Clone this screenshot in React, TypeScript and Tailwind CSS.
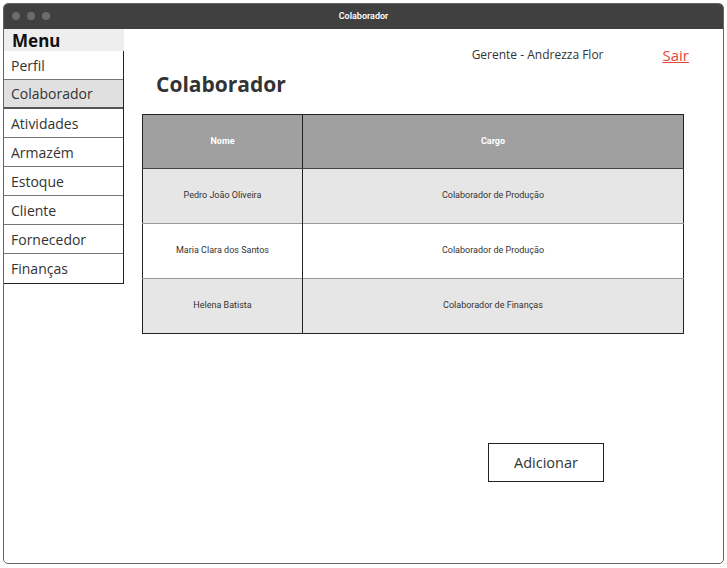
const menu = ['Perfil', 'Colaborador', 'Atividades', 'Armazém', 'Estoque', 'Cliente', 'Fornecedor', 'Finanças'];

const rows = [
  { nome: 'Pedro João Oliveira', cargo: 'Colaborador de Produção', bg: 'bg-[#e6e6e6]' },
  { nome: 'Maria Clara dos Santos', cargo: 'Colaborador de Produção', bg: 'bg-white' },
  { nome: 'Helena Batista', cargo: 'Colaborador de Finanças', bg: 'bg-[#e6e6e6]' },
];

export default function App() {
  return (
    <div className="w-[727px] h-[568px] bg-white p-[3px] pb-[4px]" style={{ fontFamily: '"Open Sans", sans-serif' }}>
      <div className="h-full flex flex-col rounded-[5px] border border-[#666] overflow-hidden">
        {/* title bar */}
        <div className="h-[25px] bg-[#404040] relative flex items-center justify-center shrink-0">
          <div className="absolute left-[8px] top-[8px] flex gap-[7px]">
            <span className="w-[8px] h-[8px] rounded-full bg-[#6b6b6b]" />
            <span className="w-[8px] h-[8px] rounded-full bg-[#6b6b6b]" />
            <span className="w-[8px] h-[8px] rounded-full bg-[#6b6b6b]" />
          </div>
          <span className="text-white text-[9px] font-semibold" style={{ fontFamily: 'Roboto, sans-serif' }}>Colaborador</span>
        </div>

        <div className="flex-1 flex">
          {/* sidebar */}
          <div className="w-[120px] shrink-0">
            <div className="h-[22px] bg-[#eeeeee] pl-[8px] text-[17px] font-bold leading-[23px] text-[#111]" style={{ fontFamily: '"Noto Sans", sans-serif' }}>
              Menu
            </div>
            <div className="border-r border-b border-[#222] w-[120px]">
              {menu.map((m, i) => (
                <div
                  key={m}
                  className={`h-[29px] pl-[7px] flex items-center text-[14px] text-[#333] ${
                    m === 'Colaborador' ? 'bg-[#e0e0e0] border-b-2 border-[#555]' : i < menu.length - 1 ? 'border-b border-[#777]' : ''
                  }`}
                >
                  {m}
                </div>
              ))}
            </div>
          </div>

          {/* content */}
          <div className="flex-1 pl-[18px] pr-[34px]">
            <div className="flex justify-end items-center h-[32px] pt-[20px] text-[#333]">
              <span className="text-[12px]">Gerente - Andrezza Flor</span>
              <a className="ml-[59px] text-[15px] text-[#e8453c] underline">Sair</a>
            </div>
            <h1 className="pl-[14px] mt-[8px] text-[21px] font-bold text-[#333] leading-[30px]">Colaborador</h1>
            <table className="mt-[15px] w-[542px] border border-[#222] border-collapse text-[9px] text-[#333]" style={{ fontFamily: 'Roboto, sans-serif' }}>
              <thead>
                <tr className="h-[54px] bg-[#a0a0a0] text-white font-bold">
                  <th className="w-[160px] border-r border-[#222] border-b border-b-[#444]">Nome</th>
                  <th className="border-b border-[#444]">Cargo</th>
                </tr>
              </thead>
              <tbody>
                {rows.map((r, i) => (
                  <tr key={r.nome} className={`h-[55px] ${r.bg} ${i < rows.length - 1 ? 'border-b border-[#999]' : ''}`}>
                    <td className="text-center border-r border-[#222]">{r.nome}</td>
                    <td className="text-center">{r.cargo}</td>
                  </tr>
                ))}
              </tbody>
            </table>
            <div className="flex justify-end mt-[109px] pr-[85px]">
              <button className="w-[116px] h-[39px] border border-[#222] text-[14.5px] text-[#333]">Adicionar</button>
            </div>
          </div>
        </div>
      </div>
    </div>
  );
}
